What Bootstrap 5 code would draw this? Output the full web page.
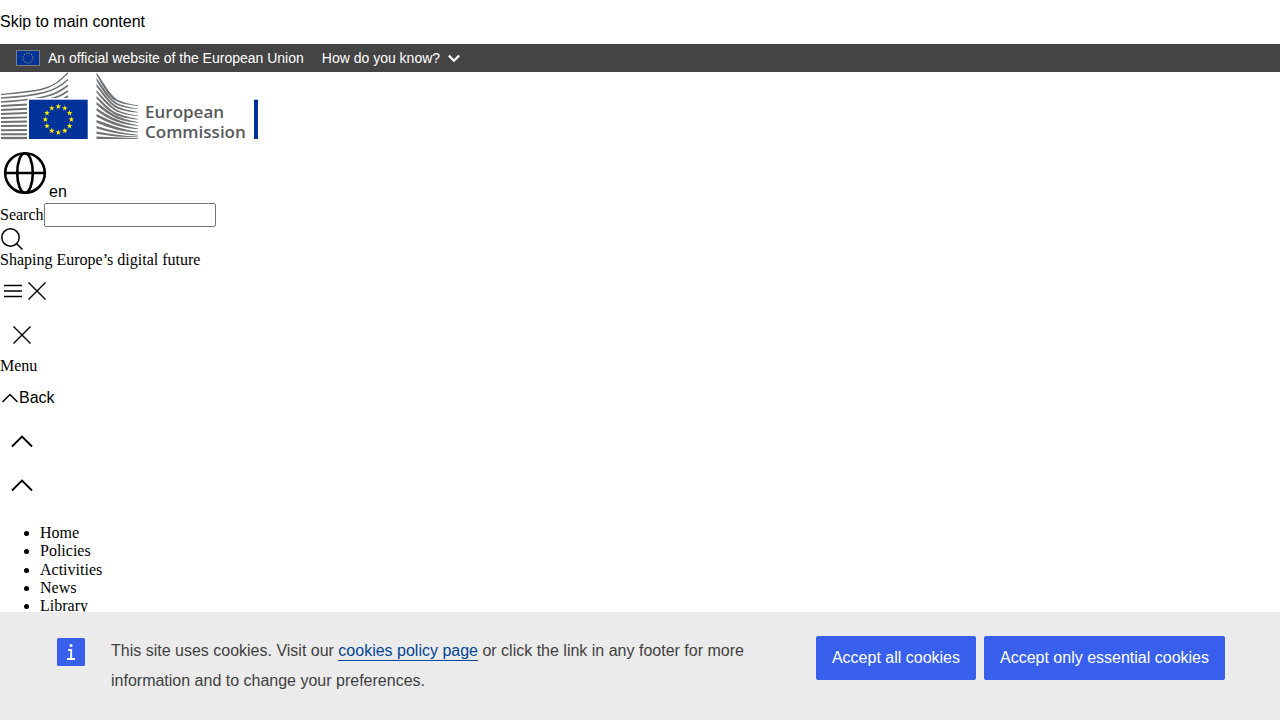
<!DOCTYPE html>
<html lang="en">
<head>
<meta charset="utf-8">
<meta name="viewport" content="width=device-width, initial-scale=1">
<title>Shaping Europe’s digital future</title>
<link href="https://cdn.jsdelivr.net/npm/bootstrap@5.3.0/dist/css/bootstrap.min.css" rel="stylesheet">
<style>
  body { font: 16px/1.15 "Liberation Serif", "Times New Roman", serif; color: #000; background: #fff; }
  svg { display: block; flex: none; }
  .plain-btn, .skip-link, .globan, .cookie-bar { font-family: "Liberation Sans", Arial, sans-serif; }
  .skip-link { height: 44px; color: #000; text-decoration: none; }
  .globan { height: 28px; background: #444; color: #fff; font-size: 14px; line-height: 20px; }
  .globan-toggle { margin-left: 18px; }
  .plain-btn { border: 0; padding: 0; background: transparent; color: inherit; }
  .tap { min-height: 44px; }
  .tap-square { width: 44px; height: 44px; }
  .lang-row { margin: 4px 0 2px; }
  .search-field { width: 172px; height: 24px; padding: 1px 2px; border: 1px solid #767676; border-radius: 2px; background: #fff; }
  .site-menu { margin: 16px 0; padding-left: 40px; }
  .site-menu a { color: #000; text-decoration: none; }
  .cookie-bar { background: #ebebeb; color: #404040; line-height: 30px; }
  .cookie-inner { max-width: 1170px; }
  .cookie-text { max-width: 660px; }
  .cookie-text a { color: #004494; text-decoration: none; border-bottom: 1px solid #004494; padding-bottom: 1px; }
  .cookie-btn { height: 44px; padding: 0 16px; border: 0; border-radius: 2px; background: #3860ed; color: #fff; white-space: nowrap; }
</style>
</head>
<body>
<a class="skip-link d-flex align-items-center" href="#main">Skip to main content</a>

<div class="globan d-flex align-items-center px-3">
  <svg class="me-2" width="24" height="16" viewBox="0 0 24 16" aria-hidden="true">
    <rect x=".5" y=".5" width="23" height="15" fill="#039" stroke="#7b7b80"/>
    <circle cx="12" cy="8" r="5" fill="none" stroke="#8a8b50" stroke-width="1.2" stroke-dasharray="1.2 1.418"/>
  </svg>
  <span>An official website of the European Union</span>
  <button class="plain-btn globan-toggle d-flex align-items-center gap-2" type="button">How do you know?
    <svg width="12" height="8" viewBox="0 0 12 8" aria-hidden="true"><path d="M.8 1.500 6 6.700 11.200 1.500" fill="none" stroke="#fff" stroke-width="2.300"/></svg>
  </button>
</div>

<header>
  <a class="d-block" href="#home" aria-label="European Commission">
    <svg width="260" height="68" viewBox="0 0 260 68">
      <g fill="none" stroke="#707173" stroke-width="1.9">
        <path d="M1 22.5C17 21 29 20 41 17.500C53 15 60 9 68 .8" stroke-width="1.3"/>
        <path d="M1 26C20 25 32 23.500 44 20.500C55 18 61 14 68 7.500" stroke-width="1.6"/>
        <path d="M1 30C24 28.500 38 27 49 23.500C58 21 62 18 68 13.500" stroke-width="1.6"/>
        <path d="M1 34 27 32.500M47 27.500C58 25.500 62 23 68 19"/>
        <path d="M1 38 27 36.800M61 28C64 27 66 25.500 68 24"/>
        <path d="M1 42 27 41M1 46 27 45.400M1 50 27 49.500M1 54 27 53.700M1 58.200 27 58M1 62.300 27 62.200"/>
        <path d="M1 66H27" stroke-width="2.3"/>
      </g>
      <g fill="#707173">
        <path d="M96.500 .5C103 10 108 19 114 25C119 30 128 31.500 138 33.300V34C126 32.500 117 31 112 26.500C106 20 102 12 96.500 3.200Z"/>
        <path d="M96.500 6C103 14 107 22 113 28C118 33 128 35 138 36.500V37.100C126 36 117 34.500 112 29.500C105 23 101 16 96.500 8.600Z"/>
        <path d="M96.500 12C102 18 107 26 113 31.500C119 36.500 128 38 138 40V40.600C126 39.500 117 38 112 33C105 27 101 20 96.500 14.500Z"/>
        <path d="M96.500 18C102 24 107 30 113 35C119 40 128 42 138 43.500V44.100C126 43 117 41 112 36.500C105 31 101 26 96.500 20.500Z"/>
        <path d="M96.500 24C103 30 107 35 113 39C120 43 128 45 138 47V47.600C126 46.500 117 44.500 112 40.500C105 36 101 31 96.500 26.400Z"/>
        <path d="M96.500 30C103 35 108 39 114 42.500C121 46 129 48.500 138 50V50.700C127 50 118 48 111 43.500C105 40 101 36.500 96.500 32.400Z"/>
        <path d="M96.500 36C103 40 108 43.500 115 46.500C122 49.500 130 52 138 53.300V54C127 53 118 51 111 47.500C105 44.500 101 42 96.500 38.400Z"/>
        <path d="M96.500 42C104 45.500 110 48.500 117 51C124 53.500 131 55.500 138 56.500V57.200C127 56.500 118 54.500 111 51.500C105 49 101 47 96.500 44.400Z"/>
        <path d="M96.500 48C106 51.500 116 55 124 57C130 58.500 134 59.300 138 59.800V60.500C127 60 118 58.500 111 56C105 54 101 52.500 96.500 50.400Z"/>
        <path d="M96.500 54C110 58 124 61.500 138 62.800V63.500C123 63.200 109 60.300 96.500 56.300Z"/>
        <path d="M96.500 59.500C110 62 124 64 138 64.600V65.300C123 65.300 109 64 96.500 61.700Z"/>
        <path d="M96.500 64.500 138 66.200V67H96.500Z"/>
      </g>
      <rect x="27.500" y="26" width="62" height="42" fill="#fff"/>
      <rect x="29" y="27.700" width="58.700" height="39.300" fill="#039"/>
      <defs><path id="star" d="M0-3 .67-.93H2.850L1.090.35 1.760 2.430 0 1.150-1.760 2.430-1.090.35-2.850-.93H-.67Z"/></defs>
      <g fill="#ffed00" transform="translate(58.300 47.500)">
        <use href="#star" y="-13"/><use href="#star" x="6.500" y="-11.300"/><use href="#star" x="11.300" y="-6.500"/><use href="#star" x="13"/>
        <use href="#star" x="11.300" y="6.500"/><use href="#star" x="6.500" y="11.300"/><use href="#star" y="13"/><use href="#star" x="-6.500" y="11.300"/>
        <use href="#star" x="-11.300" y="6.500"/><use href="#star" x="-13"/><use href="#star" x="-11.300" y="-6.500"/><use href="#star" x="-6.500" y="-11.300"/>
      </g>
      <g fill="#58595b" font-family="'Open Sans', 'Noto Sans', sans-serif" font-size="17" font-weight="600">
        <text x="145" y="46">European</text>
        <text x="145" y="66">Commission</text>
      </g>
      <rect x="254" y="27.700" width="4" height="39.300" fill="#039"/>
    </svg>
  </a>

  <button class="plain-btn lang-row d-flex align-items-end" type="button">
    <svg width="49" height="57" viewBox="0 0 49 57" aria-hidden="true">
      <g fill="none" stroke="#000" stroke-width="2.600"><circle cx="25" cy="29" r="19.800"/><ellipse cx="25" cy="29" rx="7.800" ry="19.800"/><path d="M5 29H45"/></g>
    </svg>
    <span>en</span>
  </button>

  <form>
    <div class="d-flex align-items-center">
      <label for="q">Search</label><input class="search-field" id="q" type="search">
    </div>
    <button class="plain-btn d-block" type="submit" aria-label="Search">
      <svg width="24" height="24" viewBox="0 0 24 24"><g fill="none" stroke="#000" stroke-width="1.500"><circle cx="10.500" cy="10.500" r="8.700"/><path d="M16.500 16.500 22.500 22.500"/></g></svg>
    </button>
  </form>

  <div>Shaping Europe’s digital future</div>
</header>

<nav aria-label="Main">
  <button class="plain-btn tap d-flex align-items-center" type="button" aria-label="Open menu">
    <svg width="25" height="24" viewBox="0 0 25 24"><path d="M4 6.500H22M4 12H22M4 17.500H22" stroke="#000" stroke-width="1.500"/></svg>
    <svg width="24" height="24" viewBox="0 0 24 24"><path d="M3.500 3.500 20.500 20.500M20.500 3.500 3.500 20.500" stroke="#000" stroke-width="1.400"/></svg>
  </button>
  <button class="plain-btn tap-square d-flex align-items-center justify-content-center" type="button" aria-label="Close">
    <svg width="24" height="24" viewBox="0 0 24 24"><path d="M3.500 3.500 20.500 20.500M20.500 3.500 3.500 20.500" stroke="#000" stroke-width="1.400"/></svg>
  </button>
  <div>Menu</div>
  <button class="plain-btn tap d-flex align-items-center" type="button">
    <svg width="19" height="16" viewBox="0 0 19 16" aria-hidden="true"><path d="M2.500 12 10 4.500 17.500 12" fill="none" stroke="#000" stroke-width="1.500"/></svg>Back
  </button>
  <button class="plain-btn tap-square d-flex align-items-center justify-content-center" type="button" aria-label="Previous items">
    <svg width="24" height="24" viewBox="0 0 24 24"><path d="M2 16.500 12 6.500 22 16.500" fill="none" stroke="#000" stroke-width="1.900"/></svg>
  </button>
  <button class="plain-btn tap-square d-flex align-items-center justify-content-center" type="button" aria-label="Next items">
    <svg width="24" height="24" viewBox="0 0 24 24"><path d="M2 16.500 12 6.500 22 16.500" fill="none" stroke="#000" stroke-width="1.900"/></svg>
  </button>
  <ul class="site-menu">
    <li><a href="#home">Home</a></li>
    <li><a href="#policies">Policies</a></li>
    <li><a href="#activities">Activities</a></li>
    <li><a href="#news">News</a></li>
    <li><a href="#library">Library</a></li>
  </ul>
</nav>
<main id="main"></main>

<section class="cookie-bar fixed-bottom py-4" aria-label="Cookies">
  <div class="cookie-inner mx-auto d-flex flex-wrap flex-lg-nowrap align-items-start gap-4">
    <svg width="32" height="32" viewBox="0 0 32 32" aria-hidden="true">
      <rect x="2" y="2" width="28" height="28" rx="1.500" fill="#3860ed"/>
      <circle cx="16" cy="9.500" r="1.500" fill="#fff"/><path d="M13 14H16.200V22.800M12 23H20" fill="none" stroke="#fff" stroke-width="1.900"/>
    </svg>
    <p class="cookie-text mb-0">This site uses cookies. Visit our <a href="#cookies">cookies policy page</a> or click the link in any footer for more information and to change your preferences.</p>
    <div class="d-flex flex-wrap flex-lg-nowrap gap-2 ms-auto">
      <button class="cookie-btn" type="button">Accept all cookies</button>
      <button class="cookie-btn" type="button">Accept only essential cookies</button>
    </div>
  </div>
</section>
<script src="https://cdn.jsdelivr.net/npm/bootstrap@5.3.0/dist/js/bootstrap.bundle.min.js"></script>
</body>
</html>
